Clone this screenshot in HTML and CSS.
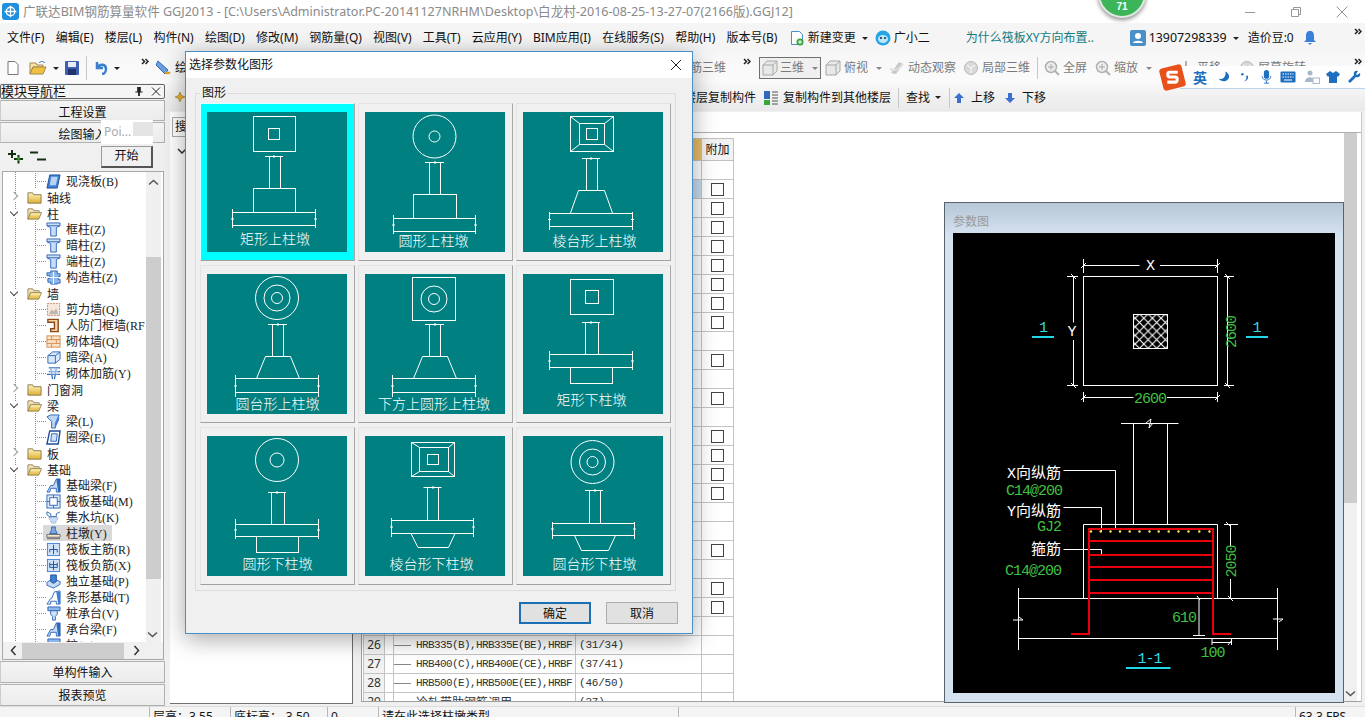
FILE: index.html
```html
<!DOCTYPE html>
<html lang="zh-CN">
<head>
<meta charset="utf-8">
<title>广联达BIM钢筋算量软件 GGJ2013</title>
<link rel="stylesheet" href="styles.css">
</head>
<body>
<svg class="defs" width="0" height="0">
  <defs>
    <linearGradient id="fy" x1="0" y1="0" x2="0" y2="1"><stop offset="0" stop-color="#fff3c0"/><stop offset="1" stop-color="#e0b030"/></linearGradient>
    <pattern id="hatch" width="8.6" height="8.6" patternUnits="userSpaceOnUse"><path d="M0 0L8.6 8.6M8.6 0L0 8.6" stroke="#fff" stroke-width="1.1"/></pattern>
    <symbol id="i-more" viewBox="0 0 8 7"><path d="M1 1l2.500 2.500L1 6M4.500 1L7 3.500 4.500 6" stroke="#222" stroke-width="1.500" fill="none"/></symbol>
    <symbol id="i-closed" viewBox="0 0 16 16"><path d="M1 3h5l1 2h8v9H1z" fill="url(#fy)" stroke="#8a7a50"/></symbol>
    <symbol id="i-open" viewBox="0 0 16 16"><path d="M1 3h5l1 2h6v2H4L1 14z" fill="#f3e3b0" stroke="#9a8a60"/><path d="M4 7h11.500l-3 7H1z" fill="url(#fy)" stroke="#9a8a60"/></symbol>
    <symbol id="i-slab" viewBox="0 0 16 16"><path d="M4 1h11l-3 14H1z" fill="#3f80d6" stroke="#1f4e9a"/><path d="M5.500 3h7l-2 9H4z" fill="#b9d4f4"/></symbol>
    <symbol id="i-col" viewBox="0 0 16 16"><path d="M1 1h14v3l-4 2v9H5V6L1 4z" fill="#c9def6" stroke="#2f68b8"/><path d="M1 4h14" stroke="#2f68b8"/></symbol>
    <symbol id="i-struct" viewBox="0 0 16 16"><path d="M5 1h7v3h3v3h-2v3h2v4h-3v1H5v-2H2V9h2V6H1V3h4z" fill="#8db6ea" stroke="#2f68b8"/><path d="M8 2v13M3 8h11" stroke="#fff"/></symbol>
    <symbol id="i-shear" viewBox="0 0 16 16"><rect x="1.500" y="1.500" width="13" height="13" fill="#f7e8de" stroke="#c88a6a" stroke-dasharray="2 1"/><path d="M3 13l3-5 2 2 3-3 2 6z" fill="#bcb6b0"/></symbol>
    <symbol id="i-door" viewBox="0 0 16 16"><path d="M2 1.500h11v13H5v-3h4v-7H2z" fill="#f6d6b0" stroke="#8a4a18" stroke-width="1.500"/></symbol>
    <symbol id="i-brick" viewBox="0 0 16 16"><rect x="1" y="2" width="14" height="12" fill="#fbe3c6" stroke="#d48a50"/><path d="M1 6h14M1 10h14M6 2v4M11 6v4M6 10v4" stroke="#d48a50"/></symbol>
    <symbol id="i-hidden" viewBox="0 0 16 16"><path d="M2 6l5-4h8v8l-5 4H2z" fill="#d9e9fa" stroke="#2f68b8"/><path d="M2 6h8v8M10 6l5-4" stroke="#2f68b8" fill="none"/></symbol>
    <symbol id="i-rebar" viewBox="0 0 16 16"><path d="M3 2h12M3 6h12M5 2l2 12M11 2l-2 12M1 9h14" stroke="#2f68b8" stroke-width="1.300" fill="none"/><rect x="4" y="2" width="9" height="7" fill="#cfe2f8" opacity=".6"/></symbol>
    <symbol id="i-beam" viewBox="0 0 16 16"><path d="M1 3l4-2h9l-4 9v5H6V8z" fill="#bcd5f2" stroke="#2f68b8"/><path d="M10 10l4-9v5l-4 9z" fill="#3f80d6"/></symbol>
    <symbol id="i-ring" viewBox="0 0 16 16"><path d="M4 1h11l-2 14H1z" fill="#fff" stroke="#1f4e9a" stroke-width="1.500"/><path d="M6 4h6l-1 8H5z" fill="#cfe2f8" stroke="#2f68b8"/></symbol>
    <symbol id="i-fbeam" viewBox="0 0 16 16"><path d="M1 15l4-7h3l3-7h4v14h-4v-4H5l-1 4z" fill="#c6dbf4" stroke="#2f68b8"/><path d="M11 1h4v14h-2z" fill="#2f68b8"/></symbol>
    <symbol id="i-raft" viewBox="0 0 16 16"><rect x="1" y="1" width="14" height="14" fill="#dbe9f9" stroke="#2f68b8"/><rect x="4" y="4" width="8" height="8" fill="#fff" stroke="#2f68b8"/><path d="M1 8h3M12 8h3M8 1v3M8 12v3" stroke="#2f68b8"/></symbol>
    <symbol id="i-pit" viewBox="0 0 16 16"><path d="M1 2l4 2v3h6V4l4-2M1 2v3l4 3" fill="none" stroke="#2f68b8"/><path d="M3 8h10l-3 6H6z" fill="#c6dbf4" stroke="#8a9ab0" stroke-dasharray="1 1"/></symbol>
    <symbol id="i-pier" viewBox="0 0 16 16"><path d="M6 1h4v3l2 4H4l2-4z" fill="#7fa8e0" stroke="#2f68b8"/><path d="M1 9h14v3H1z" fill="#f2e6d0" stroke="#6a6a6a"/><path d="M1 13.500h14" stroke="#6a6a6a"/></symbol>
    <symbol id="i-main" viewBox="0 0 16 16"><rect x="1.500" y="1.500" width="13" height="13" fill="#cfe2f8" stroke="#3f80d6"/><path d="M8 3v10M4 8h8M4 8v3M12 8v3" stroke="#1f4e9a" fill="none"/></symbol>
    <symbol id="i-neg" viewBox="0 0 16 16"><rect x="1.500" y="1.500" width="13" height="13" fill="#cfe2f8" stroke="#3f80d6"/><path d="M8 3v10M4 5v5h8V5M4 7h8" stroke="#1f4e9a" fill="none"/></symbol>
    <symbol id="i-iso" viewBox="0 0 16 16"><path d="M1 9l6-4 8 3v3l-7 4-7-3z" fill="#c6dbf4" stroke="#2f68b8"/><path d="M5 1h6v7l-3 2-3-2z" fill="#3f80d6" stroke="#1f4e9a"/></symbol>
    <symbol id="i-strip" viewBox="0 0 16 16"><path d="M1 15l4-6h1l3-7 6-1v14h-4v-3H5v3z" fill="#fff" stroke="#2f68b8"/><path d="M11 2h4v13h-2z" fill="#3f80d6"/></symbol>
    <symbol id="i-pile" viewBox="0 0 16 16"><path d="M2 1h13v4H2z" fill="#8db6ea" stroke="#2f68b8"/><path d="M5 5h7v4l-2 2v4H7v-4L5 9z" fill="#cfe2f8" stroke="#2f68b8"/></symbol>
    <symbol id="i-cube" viewBox="0 0 16 16"><path d="M1 5l4-4h10v10l-4 4H1z" fill="#e8e8e8" stroke="#a8a8a8"/><path d="M1 5h10v10M11 5l4-4" fill="none" stroke="#a8a8a8"/></symbol>
    <symbol id="i-orbit" viewBox="0 0 16 16"><path d="M2 13l8-11 4 2-7 10z" fill="#c8c8c8"/><path d="M1 9c4 2 9 0 13-5" stroke="#e0e0e0" stroke-width="2" fill="none"/></symbol>
    <symbol id="i-local" viewBox="0 0 16 16"><circle cx="8" cy="8" r="6.500" fill="#d8d8d8" stroke="#b8b8b8"/><path d="M4 5l4 3 4-3M8 8v5" stroke="#fff" fill="none"/></symbol>
    <symbol id="i-zoom" viewBox="0 0 16 16"><circle cx="7" cy="7" r="5.500" fill="#eee" stroke="#b0b0b0" stroke-width="1.500"/><path d="M11 11l4 4" stroke="#b0b0b0" stroke-width="2"/><path d="M7 4v6M4 7h6" stroke="#a8a8a8"/></symbol>
    <symbol id="i-pan" viewBox="0 0 16 16"><path d="M8 1v14M1 8h14" stroke="#b0b0b0" stroke-width="2"/></symbol>
  </defs>
</svg>

<header class="titlebar">
  <svg class="app-logo" viewBox="0 0 16 16"><rect width="16" height="16" rx="3" fill="#1e90e0"/><circle cx="8" cy="8" r="4" stroke="#fff" stroke-width="1.200" fill="none"/><path d="M8 2.500v11M2.500 8h11" stroke="#fff" stroke-width="1.200"/></svg>
  <span class="title-text">广联达BIM钢筋算量软件 GGJ2013 - [C:\Users\Administrator.PC-20141127NRHM\Desktop\白龙村-2016-08-25-13-27-07(2166版).GGJ12]</span>
  <div class="winbtns">
    <svg class="winbtn" viewBox="0 0 14 14"><path d="M2 7.500h10" stroke="#999"/></svg>
    <svg class="winbtn" viewBox="0 0 14 14"><path d="M2.500 4.500h7v7h-7zM4.500 4.500v-2h7v7h-2" stroke="#999" fill="none"/></svg>
    <svg class="winbtn" viewBox="0 0 14 14"><path d="M1.500 1.500l11 11M12.500 1.500l-11 11" stroke="#999"/></svg>
  </div>
</header>

<nav class="menubar">
  <span class="mi">文件(F)</span><span class="mi">编辑(E)</span><span class="mi">楼层(L)</span><span class="mi">构件(N)</span><span class="mi">绘图(D)</span><span class="mi">修改(M)</span><span class="mi">钢筋量(Q)</span><span class="mi">视图(V)</span><span class="mi">工具(T)</span><span class="mi">云应用(Y)</span><span class="mi">BIM应用(I)</span><span class="mi">在线服务(S)</span><span class="mi">帮助(H)</span><span class="mi">版本号(B)</span>
  <svg class="ic16" viewBox="0 0 16 16"><path d="M2.500 1.500h8l3 3v10h-11z" fill="#fff" stroke="#4a90c8"/><circle cx="11" cy="12" r="3.500" fill="#3aa53a"/><path d="M11 10v4M9 12h4" stroke="#fff"/></svg>
  <span class="mi-plain">新建变更</span><i class="caret"></i>
  <svg class="ic16 xiao" viewBox="0 0 16 16"><circle cx="8" cy="8" r="7.500" fill="#27a3e8"/><ellipse cx="8" cy="9" rx="5" ry="4" fill="#bde8fb"/><circle cx="6" cy="8" r="1" fill="#124"/><circle cx="10" cy="8" r="1" fill="#124"/></svg>
  <span class="mi-plain">广小二</span>
  <span class="mi-link">为什么筏板XY方向布置..</span>
  <svg class="ic16 user" viewBox="0 0 16 16"><rect width="16" height="16" rx="2" fill="#4a90c8"/><circle cx="8" cy="6" r="3" fill="#fff"/><path d="M3 13c0-3 10-3 10 0z" fill="#fff"/></svg>
  <span class="mi-plain phone">13907298339</span><i class="caret"></i>
  <span class="mi-plain bean">造价豆:0</span>
  <svg class="bell" viewBox="0 0 12 14"><path d="M6 0c3 0 4 2 4 5v4l2 2H0l2-2V5c0-3 1-5 4-5z" fill="#3a80d8"/><path d="M4 12h4l-2 2z" fill="#3a80d8"/></svg>
  <svg class="more more-end" viewBox="0 0 8 7"><use href="#i-more"/></svg>
</nav>

<div class="toolbar">
  <div class="tb-left">
    <svg class="ic12" viewBox="0 0 12 14"><path d="M1 .5h7l3 3v10H1z" fill="#fff" stroke="#777"/></svg>
    <svg class="ic18" viewBox="0 0 18 16"><path d="M1 3h6l1 2h6v2H4L1 14z" fill="#f6e3a8" stroke="#a08a50"/><path d="M4 7h13l-3 7H1z" fill="#f2c040" stroke="#a08a50"/><path d="M10 3c2-2 4-2 6 0" stroke="#3a70c0" fill="none"/></svg>
    <i class="caret"></i>
    <svg class="ic14 save" viewBox="0 0 14 14"><rect width="14" height="14" rx="1" fill="#3f5fb0"/><rect x="3" y="1" width="8" height="5" fill="#e8eef8"/><rect x="3" y="8" width="8" height="6" fill="#22346e"/></svg>
    <i class="tb-sep"></i>
    <svg class="ic14 undo" viewBox="0 0 14 14"><path d="M3 1v6h6M3 7c3-5 9-4 9 1 0 3-2 5-4 5" stroke="#3b80d0" stroke-width="2.500" fill="none"/></svg>
    <i class="caret"></i>
    <svg class="more more-a" viewBox="0 0 8 7"><use href="#i-more"/></svg>
    <svg class="ic16 draw-ic" viewBox="0 0 16 16"><path d="M3 1l10 9-3 4L1 5z" fill="#6ca0e0" stroke="#2f68b8"/><path d="M10 12c2 2 4 1 5 0" stroke="#e0a020" stroke-width="2" fill="none"/></svg>
    <span class="tool-dark">绘图</span>
    <span class="tb-fill"></span>
    <span class="tool-text">钢筋三维</span>
  </div>
  <svg class="more more-b" viewBox="0 0 8 7"><use href="#i-more"/></svg>
  <div class="box3d"><svg class="ic16" viewBox="0 0 16 16"><use href="#i-cube"/></svg><span>三维</span><i class="caret gray"></i></div>
  <svg class="ic16 t-top" viewBox="0 0 16 16"><use href="#i-cube"/></svg><span class="tool-text t-gap">俯视</span><i class="caret gray t-car"></i>
  <svg class="ic16 t-orb" viewBox="0 0 16 16"><use href="#i-orbit"/></svg><span class="tool-text t-gap">动态观察</span>
  <svg class="ic16 t-loc" viewBox="0 0 16 16"><use href="#i-local"/></svg><span class="tool-text t-gap">局部三维</span>
  <i class="tb-sep sep-b"></i>
  <svg class="ic16 t-full" viewBox="0 0 16 16"><use href="#i-zoom"/></svg><span class="tool-text t-gap">全屏</span>
  <svg class="ic16 t-zoom" viewBox="0 0 16 16"><use href="#i-zoom"/></svg><span class="tool-text t-gap">缩放</span><i class="caret gray t-car"></i>
  <svg class="ic16 t-pan" viewBox="0 0 16 16"><use href="#i-pan"/></svg><span class="tool-text t-gap">平移</span>
  <svg class="ic16 t-rot" viewBox="0 0 16 16"><use href="#i-local"/></svg><span class="tool-text t-gap">屏幕旋转</span>
  <svg class="more more-end" viewBox="0 0 8 7"><use href="#i-more"/></svg>
</div>

<main class="workspace">
  <aside class="nav">
    <div class="nav-title"><span>模块导航栏</span><svg class="pin" viewBox="0 0 10 12"><path d="M3 1h4v5h2v1H6v4H4V7H1V6h2z" fill="#222"/></svg><svg class="pin" viewBox="0 0 10 10"><path d="M1 1l8 8M9 1L1 9" stroke="#222"/></svg></div>
    <div class="nav-btn">工程设置</div>
    <div class="nav-btn">绘图输入</div>
    <div class="nav-tools">
      <svg class="ic16" viewBox="0 0 16 16"><path d="M4 1v8M0 5h8M10.500 6v8.500M6 10h9" stroke="#143014" stroke-width="2"/><path d="M10.500 8v4M8.500 10h4" stroke="#3aa53a"/></svg>
      <svg class="ic16" viewBox="0 0 16 16"><path d="M0 3.500h8M7 10.500h9" stroke="#143014" stroke-width="2"/></svg>
    </div>
    <div class="tree-wrap">
      <div class="tree">
        <div class="t1"><svg class="ti"><use href="#i-slab"/></svg><span>现浇板(B)</span></div>
        <div class="t0"><i class="ar closed"></i><svg class="tf"><use href="#i-closed"/></svg><span>轴线</span></div>
        <div class="t0"><i class="ar opened"></i><svg class="tf"><use href="#i-open"/></svg><span>柱</span></div>
        <div class="t1"><svg class="ti"><use href="#i-col"/></svg><span>框柱(Z)</span></div>
        <div class="t1"><svg class="ti"><use href="#i-col"/></svg><span>暗柱(Z)</span></div>
        <div class="t1"><svg class="ti"><use href="#i-col"/></svg><span>端柱(Z)</span></div>
        <div class="t1"><svg class="ti"><use href="#i-struct"/></svg><span>构造柱(Z)</span></div>
        <div class="t0"><i class="ar opened"></i><svg class="tf"><use href="#i-open"/></svg><span>墙</span></div>
        <div class="t1"><svg class="ti"><use href="#i-shear"/></svg><span>剪力墙(Q)</span></div>
        <div class="t1"><svg class="ti"><use href="#i-door"/></svg><span>人防门框墙(RF</span></div>
        <div class="t1"><svg class="ti"><use href="#i-brick"/></svg><span>砌体墙(Q)</span></div>
        <div class="t1"><svg class="ti"><use href="#i-hidden"/></svg><span>暗梁(A)</span></div>
        <div class="t1"><svg class="ti"><use href="#i-rebar"/></svg><span>砌体加筋(Y)</span></div>
        <div class="t0"><i class="ar closed"></i><svg class="tf"><use href="#i-closed"/></svg><span>门窗洞</span></div>
        <div class="t0"><i class="ar opened"></i><svg class="tf"><use href="#i-open"/></svg><span>梁</span></div>
        <div class="t1"><svg class="ti"><use href="#i-beam"/></svg><span>梁(L)</span></div>
        <div class="t1"><svg class="ti"><use href="#i-ring"/></svg><span>圈梁(E)</span></div>
        <div class="t0"><i class="ar closed"></i><svg class="tf"><use href="#i-closed"/></svg><span>板</span></div>
        <div class="t0"><i class="ar opened"></i><svg class="tf"><use href="#i-open"/></svg><span>基础</span></div>
        <div class="t1"><svg class="ti"><use href="#i-fbeam"/></svg><span>基础梁(F)</span></div>
        <div class="t1"><svg class="ti"><use href="#i-raft"/></svg><span>筏板基础(M)</span></div>
        <div class="t1"><svg class="ti"><use href="#i-pit"/></svg><span>集水坑(K)</span></div>
        <div class="t1 sel"><svg class="ti"><use href="#i-pier"/></svg><span>柱墩(Y)</span></div>
        <div class="t1"><svg class="ti"><use href="#i-main"/></svg><span>筏板主筋(R)</span></div>
        <div class="t1"><svg class="ti"><use href="#i-neg"/></svg><span>筏板负筋(X)</span></div>
        <div class="t1"><svg class="ti"><use href="#i-iso"/></svg><span>独立基础(P)</span></div>
        <div class="t1"><svg class="ti"><use href="#i-strip"/></svg><span>条形基础(T)</span></div>
        <div class="t1"><svg class="ti"><use href="#i-pile"/></svg><span>桩承台(V)</span></div>
        <div class="t1"><svg class="ti"><use href="#i-fbeam"/></svg><span>承台梁(F)</span></div>
        <div class="t1"><svg class="ti"><use href="#i-pile"/></svg><span>桩(U)</span></div>
      </div>
      <div class="vscroll">
        <svg class="arrow" viewBox="0 0 15 15"><path d="M3 9.500l4.500-4 4.500 4" stroke="#555" stroke-width="1.500" fill="none"/></svg>
        <i class="v-thumb"></i>
        <svg class="arrow arrow-end" viewBox="0 0 15 15"><path d="M3 5.500l4.500 4 4.500-4" stroke="#555" stroke-width="1.500" fill="none"/></svg>
      </div>
    </div>
    <div class="hscroll">
      <svg class="arrow" viewBox="0 0 15 15"><path d="M9.500 3l-4 4.500 4 4.500" stroke="#333" stroke-width="1.500" fill="none"/></svg>
      <i class="h-thumb"></i>
      <svg class="arrow" viewBox="0 0 15 15"><path d="M5.500 3l4 4.500-4 4.500" stroke="#333" stroke-width="1.500" fill="none"/></svg>
    </div>
    <div class="nav-btn foot">单构件输入</div>
    <div class="nav-btn foot">报表预览</div>
  </aside>

  <div class="main-col">
    <div class="toolbar2">
      <svg class="ic10 star" viewBox="0 0 10 10"><path d="M5 0l1.500 3.500L10 5 6.500 6.500 5 10 3.500 6.500 0 5l3.500-1.500z" fill="#e8b030" stroke="#8a6a20" stroke-width=".5"/></svg>
      <span class="tb2-fill"></span>
      <span class="tb2-text">从其他楼层复制构件</span>
      <svg class="ic16 copy-ic" viewBox="0 0 16 16"><rect x="1" y="1" width="6" height="8" fill="#2f68b8"/><rect x="1" y="10" width="6" height="5" fill="#3aa53a"/><path d="M9 2h6M9 5h6M9 8h6M9 11h6M9 14h6" stroke="#555"/></svg>
      <span class="tb2-text">复制构件到其他楼层</span>
      <i class="tb-sep sep2"></i>
      <span class="tb2-text">查找</span><i class="caret find-car"></i>
      <i class="tb-sep sep3"></i>
      <svg class="ic10 up" viewBox="0 0 10 10"><path d="M5 0l5 5H7v5H3V5H0z" fill="#3b70d0"/></svg>
      <span class="tb2-text mv">上移</span>
      <svg class="ic10 dn" viewBox="0 0 10 10"><path d="M5 10l5-5H7V0H3v5H0z" fill="#3b70d0"/></svg>
      <span class="tb2-text mv">下移</span>
    </div>
    <div class="panels">
      <section class="list-panel">
        <div class="search"><span>搜</span></div>
        <svg class="chev" viewBox="0 0 10 6"><path d="M1 1l4 4 4-4" stroke="#333" stroke-width="1.500" fill="none"/></svg>
      </section>
      <section class="grid-panel">
        <div class="grid-tabs"></div>
        <div class="grid-body">
          <div class="grid-clip">
            <table class="grid">
              <colgroup><col class="c1"><col class="c2"><col class="c3"><col class="c4"><col class="c5"></colgroup>
              <thead><tr><th></th><th></th><th>级别</th><th class="hot"></th><th>附加</th></tr></thead>
              <tbody>
                <tr><td></td><td></td><td></td><td></td><td></td></tr>
                <tr><td>1</td><td></td><td></td><td class="cur"></td><td><i class="chk"></i></td></tr>
                <tr><td>2</td><td></td><td></td><td></td><td><i class="chk"></i></td></tr>
                <tr><td>3</td><td></td><td></td><td></td><td><i class="chk"></i></td></tr>
                <tr><td>4</td><td></td><td></td><td></td><td><i class="chk"></i></td></tr>
                <tr><td>5</td><td></td><td></td><td></td><td><i class="chk"></i></td></tr>
                <tr><td>6</td><td></td><td></td><td></td><td><i class="chk"></i></td></tr>
                <tr><td>7</td><td></td><td></td><td></td><td><i class="chk"></i></td></tr>
                <tr><td>8</td><td></td><td></td><td></td><td><i class="chk"></i></td></tr>
                <tr><td>9</td><td></td><td></td><td></td><td></td></tr>
                <tr><td>10</td><td></td><td></td><td></td><td><i class="chk"></i></td></tr>
                <tr><td>11</td><td></td><td></td><td></td><td></td></tr>
                <tr><td>12</td><td></td><td></td><td></td><td><i class="chk"></i></td></tr>
                <tr><td>13</td><td></td><td></td><td></td><td></td></tr>
                <tr><td>14</td><td></td><td></td><td></td><td><i class="chk"></i></td></tr>
                <tr><td>15</td><td></td><td></td><td></td><td><i class="chk"></i></td></tr>
                <tr><td>16</td><td></td><td></td><td></td><td><i class="chk"></i></td></tr>
                <tr><td>17</td><td></td><td></td><td></td><td><i class="chk"></i></td></tr>
                <tr><td>18</td><td></td><td></td><td></td><td></td></tr>
                <tr><td>19</td><td></td><td></td><td></td><td></td></tr>
                <tr><td>20</td><td></td><td></td><td></td><td><i class="chk"></i></td></tr>
                <tr><td>21</td><td></td><td></td><td></td><td></td></tr>
                <tr><td>22</td><td></td><td></td><td></td><td><i class="chk"></i></td></tr>
                <tr><td>23</td><td></td><td></td><td></td><td><i class="chk"></i></td></tr>
                <tr><td>24</td><td></td><td></td><td></td><td></td></tr>
                <tr><td>26</td><td></td><td class="nm">HRB335(B),HRB335E(BE),HRBF</td><td class="val">(31/34)</td><td></td></tr>
                <tr><td>27</td><td></td><td class="nm">HRB400(C),HRB400E(CE),HRBF</td><td class="val">(37/41)</td><td></td></tr>
                <tr><td>28</td><td></td><td class="nm">HRB500(E),HRB500E(EE),HRBF</td><td class="val">(46/50)</td><td></td></tr>
                <tr><td>29</td><td></td><td class="nm cjk">冷轧带肋钢筋调用</td><td class="val">(37)</td><td></td></tr>
              </tbody>
            </table>
          </div>
          <div class="vscroll2">
            <i class="v2-thumb"></i>
            <svg class="arrow arrow-end" viewBox="0 0 15 15"><path d="M3 5.500l4.500 4 4.500-4" stroke="#555" stroke-width="1.500" fill="none"/></svg>
          </div>
        </div>
      </section>
    </div>
  </div>
</main>

<footer class="statusbar">
  <span class="s s1"></span><span class="s s2">层高：3.55</span><span class="s s3">底标高：-3.50</span><span class="s s4">0</span><span class="s s5">请在此选择柱墩类型</span><span class="s s6"></span><span class="s s7">63.3 FPS</span>
</footer>

<div class="badge"><span>71</span></div>

<div class="sogou">
  <svg class="sg-logo" viewBox="0 0 26 26"><rect x="2" y="2" width="22" height="22" rx="3" transform="rotate(-14 13 13)" fill="#e8501c"/><path d="M18 8H10c-2 0-2 4 0 4.500h6c2 .5 2 4.500 0 5H8" stroke="#fff" stroke-width="3" fill="none"/></svg>
  <span class="sg-en">英</span>
  <svg class="sg sg-m" viewBox="0 0 14 14"><path d="M9 1c1 5-2 9-7 8 2 4 11 4 11-3 0-2-2-4-4-5z" fill="#1f6fc0"/></svg>
  <svg class="sg sg-p" viewBox="2 1 10 13"><circle cx="5" cy="4" r="1.500" fill="#1f6fc0"/><path d="M8 6c3 0 3 4-1 7 4-1 6-4 5-7z" fill="#1f6fc0"/></svg>
  <svg class="sg sg-v" viewBox="0 0 14 16"><rect x="4" y="0" width="6" height="10" rx="3" fill="#1f6fc0"/><path d="M2 7c0 6 10 6 10 0M7 12v3M4 15h6" stroke="#1f6fc0" fill="none"/></svg>
  <svg class="sg sg-k" viewBox="0 0 16 12"><rect x=".5" y=".5" width="15" height="11" rx="1" fill="#1f6fc0"/><path d="M2.500 3h11M2.500 6h11" stroke="#fff" stroke-dasharray="1.500 1"/><path d="M4 9h8" stroke="#fff"/></svg>
  <svg class="sg sg-u" viewBox="0 0 16 14"><circle cx="6" cy="3" r="2.500" fill="#a8b8c8"/><path d="M1 12c0-6 9-6 9-1v1z" fill="#a8b8c8"/><rect x="9" y="8" width="6.500" height="5.500" fill="#fff" stroke="#a8b8c8"/></svg>
  <svg class="sg sg-s" viewBox="0 0 14 14"><path d="M4 1L0 4l2 3 1-1v7h8V6l1 1 2-3-4-3-3 2z" fill="#1f6fc0"/></svg>
  <svg class="sg sg-w" viewBox="0 0 14 14"><path d="M13 3l-3 2-1-1 2-3c-3-1-5 1-4 4L1 11l2 2 6-6c3 1 5-1 4-4z" fill="#1f6fc0"/></svg>
</div>

<div class="poi"><span>Poi...</span><i></i></div>
<div class="poi-start">开始</div>

<!-- parameter drawing -->
<div class="param">
  <div class="param-title">参数图</div>
  <svg class="param-svg" viewBox="953 233 382 460">
    <g class="w">
      <rect x="1083.500" y="276.500" width="134" height="109"/>
      <rect x="1133.500" y="314.500" width="34" height="34" class="solid"/>
      <path d="M1083.500 265.500h56M1160 265.500h57.500M1083.500 259v14M1217.500 259v14M1081 268l5-5M1215 268l5-5"/>
      <path d="M1073.500 276.500v46M1073.500 340v45.500M1067 276.500h11M1067 385.500h11M1071 274l5 5M1071 383l5 5"/>
      <path d="M1227.500 276.500v109M1224 276.500h10M1224 385.500h10M1225 274l5 5M1225 383l5 5"/>
      <path d="M1083.500 397.500h50M1167 397.500h50.500M1083.500 392v10M1217.500 392v10M1081 400l5-5M1215 400l5-5"/>
      <path d="M1121 423.500h57.500M1133.500 423.500v101M1167.500 423.500v101M1150 424l-4-1 5-4-2 9 4-5"/>
      <path d="M1083.500 524.500h134M1083.500 524.500v74M1217.500 524.500v74"/>
      <path d="M1018.500 598.500h259M1018.500 638.500h259M1018.500 588v62M1277.500 588v62M1013 620h10l-4-3M1273 619h10l-4 3"/>
      <path d="M1063.500 470.500h52v58M1063.500 507.500h38v24M1063.500 549.500h38v6"/>
      <path d="M1230.500 524v22M1230.500 579v19M1224 524.500h14M1226 522l5 5M1228 596l5 5"/>
      <path d="M1199 598v37M1193 635.500h12M1197 596l3 4"/>
      <path d="M1212 642.500h20M1212 639v6M1231.500 639v6M1228 645l4-5"/>
    </g>
    <g class="r">
      <path d="M1071 634h18V529h124v105h18"/>
      <path d="M1089 541h124M1089 555h124M1089 567h124M1089 580h124M1089 593h124"/>
    </g>
    <g class="dots">
      <circle cx="1091" cy="531.500" r="1.200"/><circle cx="1100.700" cy="531.500" r="1.200"/><circle cx="1110.500" cy="531.500" r="1.200"/><circle cx="1120" cy="531.500" r="1.200"/><circle cx="1129.700" cy="531.500" r="1.200"/><circle cx="1139.500" cy="531.500" r="1.200"/><circle cx="1149.500" cy="531.500" r="1.200"/><circle cx="1158.700" cy="531.500" r="1.200"/><circle cx="1168.700" cy="531.500" r="1.200"/><circle cx="1178.500" cy="531.500" r="1.200"/><circle cx="1188.500" cy="531.500" r="1.200"/><circle cx="1199.300" cy="531.500" r="1.200"/><circle cx="1209.500" cy="531.500" r="1.200"/>
    </g>
    <g class="cy">
      <path d="M1032 337h22M1246 337h22M1126 668h44.500"/>
    </g>
    <text class="tm twh" x="1150" y="270" text-anchor="middle">X</text>
    <text class="tm twh" x="1071.500" y="336" text-anchor="middle">Y</text>
    <text class="tm tgr" x="1150" y="403" text-anchor="middle">2600</text>
    <text class="tm tgr" transform="translate(1236 332) rotate(-90)" text-anchor="middle">2600</text>
    <text class="tm tcy" x="1043" y="332" text-anchor="middle">1</text>
    <text class="tm tcy" x="1256.500" y="332" text-anchor="middle">1</text>
    <text class="tc twh" x="1061" y="478" text-anchor="end">X向纵筋</text>
    <text class="tm tgr" x="1062" y="495" text-anchor="end">C14@200</text>
    <text class="tc twh" x="1061" y="516" text-anchor="end">Y向纵筋</text>
    <text class="tm tgr" x="1061" y="531" text-anchor="end">GJ2</text>
    <text class="tc twh" x="1061" y="554" text-anchor="end">箍筋</text>
    <text class="tm tgr" x="1061" y="575" text-anchor="end">C14@200</text>
    <text class="tm tgr" transform="translate(1236 561.500) rotate(-90)" text-anchor="middle">2050</text>
    <text class="tm tgr" x="1184" y="622" text-anchor="middle">610</text>
    <text class="tm tgr" x="1212.500" y="657" text-anchor="middle">100</text>
    <text class="tm tcy" x="1149.500" y="663" text-anchor="middle">1-1</text>
  </svg>
</div>

<!-- dialog -->
<div class="dialog">
  <div class="dlg-title"><span>选择参数化图形</span><svg class="dlg-x" viewBox="0 0 12 12"><path d="M1 1l10 10M11 1L1 11" stroke="#222"/></svg></div>
  <div class="dlg-body">
    <fieldset class="group">
      <legend>图形</legend>
      <div class="cards">
        <div class="card on"><svg class="pic" viewBox="0 0 140 140">
          <rect x="46.500" y="4.500" width="42" height="35"/><rect x="61.500" y="16.500" width="11" height="11"/>
          <path d="M58 44.500h18M62.500 44.500V76.500M73.500 44.500V76.500M67 43v3"/>
          <rect x="46.500" y="76.500" width="42" height="24"/><rect x="25.500" y="100.500" width="83" height="13"/>
          <path d="M25.500 97v19M108.500 97v19M24 107h3M107 107h3"/>
          <text x="68" y="132" text-anchor="middle">矩形上柱墩</text></svg></div>
        <div class="card"><svg class="pic" viewBox="0 0 140 140">
          <circle cx="69.500" cy="24.500" r="21.500"/><circle cx="69.500" cy="24.500" r="5.500"/>
          <path d="M60 50.500h19M64.500 50.500V82.500M75.500 50.500V82.500M70 49v3"/>
          <rect x="48.500" y="82.500" width="43" height="24"/><rect x="28.500" y="106.500" width="82" height="13"/>
          <path d="M28.500 103v19M110.500 103v19M27 113h3M109 113h3"/>
          <text x="68.500" y="134" text-anchor="middle">圆形上柱墩</text></svg></div>
        <div class="card"><svg class="pic" viewBox="0 0 140 140">
          <rect x="47.500" y="4.500" width="43" height="35"/><rect x="56.500" y="11.500" width="25" height="21"/><rect x="63.500" y="16.500" width="11" height="11"/>
          <path d="M47.500 4.500l9 7M90.500 4.500l-9 7M47.500 39.500l9-7M90.500 39.500l-9-7"/>
          <path d="M59 46.500h18M63.500 46.500V78.500M74.500 46.500V78.500M68 45v3M55.500 78.500h26l8 22.500M55.500 78.500l-8 22.500"/>
          <rect x="26.500" y="101.500" width="83" height="13"/>
          <path d="M26.500 100v18M109.500 100v18M25 107.500h3M108 107.500h3"/>
          <text x="71.500" y="134" text-anchor="middle">棱台形上柱墩</text></svg></div>

        <div class="card"><svg class="pic" viewBox="0 0 140 140">
          <circle cx="70" cy="24" r="21.500"/><circle cx="70" cy="24" r="13"/><circle cx="70" cy="24" r="5.500"/>
          <path d="M61 50.500h19M65.500 50.500V82.500M76.500 50.500V82.500M71 49v3M58.500 82.500h25l9 22M58.500 82.500l-9 22"/>
          <rect x="28.500" y="104.500" width="83" height="14"/>
          <path d="M28.500 101v22M111.500 101v22M27 112h3M110 112h3"/>
          <text x="70.500" y="135" text-anchor="middle">圆台形上柱墩</text></svg></div>
        <div class="card"><svg class="pic" viewBox="0 0 140 140">
          <rect x="47.500" y="3.500" width="43" height="43"/><circle cx="69" cy="25" r="13"/><circle cx="69" cy="25" r="5.500"/>
          <path d="M60 50.500h19M64.500 50.500V82.500M75.500 50.500V82.500M70 49v3M57.500 82.500h25l9 22M57.500 82.500l-9 22"/>
          <rect x="27.500" y="104.500" width="83" height="14"/>
          <path d="M27.500 101v22M110.500 101v22M26 112h3M109 112h3"/>
          <text x="69" y="135" text-anchor="middle">下方上圆形上柱墩</text></svg></div>
        <div class="card"><svg class="pic" viewBox="0 0 140 140">
          <rect x="47.500" y="5.500" width="43" height="35"/><rect x="62.500" y="16.500" width="13" height="13"/>
          <path d="M59 48.500h18M62.500 48.500V80.500M75.500 48.500V80.500M68 47v3"/>
          <rect x="26.500" y="80.500" width="83" height="13"/><rect x="47.500" y="93.500" width="42" height="16"/>
          <path d="M26.500 77v19M109.500 77v19M25 87h3M108 87h3"/>
          <text x="68.500" y="131" text-anchor="middle">矩形下柱墩</text></svg></div>

        <div class="card"><svg class="pic" viewBox="0 0 140 140">
          <circle cx="70" cy="24" r="21.500"/><circle cx="70" cy="24" r="7"/>
          <path d="M61 56.500h18M64.500 56.500V88.500M77.500 56.500V88.500M70 55v3"/>
          <rect x="28.500" y="88.500" width="83" height="12"/><rect x="49.500" y="100.500" width="42" height="16"/>
          <path d="M28.500 83v20M111.500 83v20M27 94h3M110 94h3"/>
          <text x="70.500" y="133" text-anchor="middle">圆形下柱墩</text></svg></div>
        <div class="card"><svg class="pic" viewBox="0 0 140 140">
          <rect x="46.500" y="6.500" width="43" height="34"/><rect x="54.500" y="11.500" width="29" height="24"/><rect x="62.500" y="18.500" width="11" height="10"/>
          <path d="M46.500 6.500l8 5M89.500 6.500l-6 5M46.500 40.500l8-5M89.500 40.500l-6-5"/>
          <path d="M58.500 51.500h18M62.500 51.500V84M73.500 51.500V84M68 50v3"/>
          <rect x="26.500" y="84.500" width="82" height="13"/>
          <path d="M26.500 82v19M108.500 82v19M25 91h3M107 91h3M46 97.500l7 14h30.500l6.500-14"/>
          <text x="66.500" y="133" text-anchor="middle">棱台形下柱墩</text></svg></div>
        <div class="card"><svg class="pic" viewBox="0 0 140 140">
          <circle cx="69.500" cy="26" r="21.500"/><circle cx="69.500" cy="26" r="13"/><circle cx="69.500" cy="26" r="5.500"/>
          <path d="M62 54.500h18M66.500 54.500V87M77.500 54.500V87M72 53v3"/>
          <rect x="29.500" y="87.500" width="82" height="12"/>
          <path d="M29.500 86v17M111.500 86v17M28 93h3M110 93h3M51.500 99.500l7 15h27l7-15"/>
          <text x="71.500" y="133" text-anchor="middle">圆台形下柱墩</text></svg></div>
      </div>
    </fieldset>
    <div class="dlg-foot">
      <button class="btn primary" type="button">确定</button>
      <button class="btn" type="button">取消</button>
    </div>
  </div>
</div>
</body>
</html>
```

FILE: styles.css
```css
* { box-sizing: border-box; }
html, body { margin: 0; padding: 0; }
body {
  width: 1365px; height: 717px; overflow: hidden; position: relative;
  display: flex; flex-direction: column; background: #f0f0f0; color: #111;
  font: 12px/16px "Noto Sans", "Noto Sans CJK SC", sans-serif;
}
.defs { position: absolute; }
svg { display: block; flex: none; }
i { display: block; flex: none; }
.ic10 { width: 10px; height: 10px; }
.ic12 { width: 12px; height: 14px; }
.ic14 { width: 14px; height: 14px; }
.ic16 { width: 16px; height: 16px; }
.ic18 { width: 18px; height: 16px; }

/* title */
.titlebar { height: 23px; background: #fff; display: flex; align-items: center; padding-left: 2px; flex: none; }
.app-logo { width: 17px; height: 17px; }
.title-text { margin-left: 4px; color: #8a8a8a; font-size: 12.55px; white-space: nowrap; }
.winbtns { margin-left: auto; display: flex; gap: 32px; padding-right: 16px; }
.winbtn { width: 14px; height: 14px; }

/* menu */
.menubar { height: 30px; background: #f5f5f5; display: flex; align-items: center; padding-left: 7px; white-space: nowrap; flex: none; }
.mi { margin-right: 11.2px; font-size: 12px; color: #111; }
.mi-plain { font-size: 12px; margin-left: 3px; }
.caret { width: 0; height: 0; border-left: 3px solid transparent; border-right: 3px solid transparent; border-top: 3px solid #222; margin: 0 6px; }
.caret.gray { border-top-color: #888; }
.xiao { margin-left: 1px; }
.mi-link { color: #137a80; margin-left: 36px; width: 164px; font-size: 12px; }
.phone { font-size: 12.4px; }
.bean { margin-left: 3px; }
.bell { width: 12px; height: 14px; margin-left: 10px; }
.more { width: 8px; height: 7px; }
.more-end { margin: -14px 3px 0 auto; }

/* toolbar */
.toolbar { height: 30px; background: linear-gradient(#f7f7f7, #fbfbfb); display: flex; align-items: center; flex: none; white-space: nowrap; color: #7a7a7a; }
.tb-left { width: 726px; display: flex; align-items: center; padding-left: 7px; flex: none; }
.tb-left .ic18 { margin-left: 10px; }
.tb-sep { width: 1px; height: 24px; background: #c8c8c8; margin: 0 7px; }
.more-a { margin: -14px 0 0 15px; }
.draw-ic { margin-left: 6px; }
.tool-dark { margin-left: 4px; color: #111; }
.tb-fill { flex: 1; }
.tool-text { font-size: 12px; color: #7a7a7a; }
.more-b { margin: -14px 0 0 17px; }
.box3d { margin-left: 8px; width: 62px; height: 22px; border: 1px solid #707070; display: flex; align-items: center; padding-left: 2px; gap: 2px; background: #f0f0f0; }
.box3d .caret { margin: 0 0 0 6px; }
.t-top { margin-left: 4px; }
.t-gap { margin-left: 3px; }
.t-car { margin: 0 0 0 8px; }
.t-orb { margin-left: 7px; }
.t-loc { margin-left: 7px; }
.sep-b { margin: 0 6px 0 7px; height: 22px; }
.t-zoom { margin-left: 8px; }
.t-pan { margin-left: 26px; }
.t-rot { margin-left: 18px; }

/* workspace */
.workspace { flex: 1; display: flex; min-height: 0; }
.nav { width: 165px; flex: none; display: flex; flex-direction: column; padding-top: 1px; background: #f0f0f0; }
.nav-title { height: 15px; border: 1px solid #666; border-radius: 2px; display: flex; align-items: center; font-size: 13px; line-height: 13px; background: #f5f5f5; }
.nav-title span { flex: 1; }
.pin { width: 10px; height: 11px; margin-right: 7px; }
.pin + .pin { margin-right: 3px; }
.nav-btn { height: 21px; margin-top: 1px; text-align: center; line-height: 23px; font-size: 12px; background: linear-gradient(#f4f4f4, #ececec); border: 1px solid #b0b0b0; border-left-color: #ccc; flex: none; }
.nav-btn.foot { height: 22px; line-height: 21px; }
.nav-tools { height: 28px; display: flex; align-items: center; padding-left: 8px; gap: 6px; flex: none; }
.tree-wrap { flex: 1; min-height: 0; border: 1px solid #a8a8a8; border-bottom: none; margin-left: 2px; margin-right: 1px; background: #fff; display: flex; position: relative; overflow: hidden; }
.tree { flex: 1; overflow: hidden; padding-top: 1px; font-family: "Liberation Serif", "Noto Sans CJK SC", serif; font-size: 12px; color: #222;
  background: repeating-linear-gradient(#888 0 1px, transparent 1px 2px) 12px 0 / 1px 100% no-repeat; }
.t0, .t1 { height: 16px; display: flex; align-items: center; white-space: nowrap; }
.t0 { padding-left: 7px; }
.t1 { padding-left: 43px; position: relative;
  background: repeating-linear-gradient(#888 0 1px, transparent 1px 2px) 32px 0 / 1px 100% no-repeat; }
.t1 span, .t0 span { position: relative; top: 1px; }
.t1::before { content: ""; position: absolute; left: 32px; top: 8px; width: 11px; border-top: 1px dotted #888; }
.t0 .tf { width: 15px; height: 15px; margin: 0 5px 0 8px; }
.t0 span { font-size: 12px; font-family: "Noto Sans CJK SC", sans-serif; }
.ti { width: 15px; height: 15px; margin-right: 5px; position: relative; }
.t1.sel::after { content: ""; position: absolute; left: 40px; top: 0; width: 69px; height: 16px; background: #d9d9d9; z-index: 0; }
.t1.sel .ti, .t1.sel span { position: relative; z-index: 1; }
.ar { width: 9px; height: 9px; background: #fff; position: relative; }
.ar::before { content: ""; position: absolute; left: 1px; top: 0; width: 5px; height: 5px; border-right: 1.500px solid #999; border-bottom: 1.500px solid #999; }
.ar.closed::before { transform: rotate(-45deg); }
.ar.opened::before { transform: rotate(45deg); border-color: #444; }
.vscroll { width: 15px; flex: none; background: #f0f0f0; margin-right: 2px; display: flex; flex-direction: column; position: relative; }
.arrow { width: 15px; height: 15px; }
.arrow-end { position: absolute; bottom: 0; }
.vscroll .arrow { margin-top: 3px; }
.vscroll .arrow-end { margin-top: 0; }
.v-thumb { height: 322px; margin-top: 67px; background: #cdcdcd; }
.hscroll { height: 18px; flex: none; border: 1px solid #a8a8a8; border-top: none; margin: 0 1px 0 2px; display: flex; align-items: center; padding-left: 3px; background: #f0f0f0; }
.h-thumb { width: 102px; height: 16px; margin: 0 5px 0 1px; background: #cdcdcd; }

/* main column */
.main-col { flex: 1; min-width: 0; display: flex; flex-direction: column; }
.toolbar2 { height: 28px; flex: none; display: flex; align-items: center; background: linear-gradient(#f8f8f8, #e9e9e9); white-space: nowrap; padding: 1px 0 0 10px; }
.star { margin-top: -2px; }
.tb2-fill { width: 463px; flex: none; }
.tb2-text { font-size: 12px; color: #111; }
.copy-ic { margin: 0 4px 0 7px; }
.sep2 { margin: 0 7px; height: 20px; }
.find-car { margin: 0 3px 0 5px; }
.sep3 { margin: 0 4px 0 5px; height: 20px; }
.mv { margin: 0 10px 0 7px; }
.panels { flex: 1; min-height: 0; display: flex; gap: 8px; padding: 1px 3px 2px 5px; background: #f0f0f0; }
.list-panel { width: 183px; flex: none; background: #fff; border-right: 1px solid #707070; border-bottom: 1px solid #707070; position: relative; }
.search { height: 20px; margin: 5px 0 0 2px; border: 1px solid #aaa; border-right: none; padding-left: 2px; line-height: 18px; background: #fff; }
.chev { width: 10px; height: 6px; margin: 11px 0 0 7px; }
.grid-panel { flex: 1; min-width: 0; background: #fff; display: flex; flex-direction: column; border-left: 1px solid #a0a0a0; border-right: 1px solid #c8c8c8; margin-bottom: 2px; }
.grid-tabs { height: 21px; flex: none; border-bottom: 1px solid #b0b0b0; }
.grid-body { flex: 1; min-height: 0; display: flex; border-bottom: 1px solid #a0a0a0; }
.grid-clip { flex: 1; min-width: 0; overflow: hidden; padding: 5px 0 0 1px; }
.grid { width: 370px; table-layout: fixed; border-collapse: collapse; font-size: 12px; }
.c1 { width: 21px; } .c2 { width: 9px; } .c3 { width: 182px; } .c4 { width: 126px; } .c5 { width: 32px; }
.grid th { height: 22px; padding: 0; background: #f2f2f2; font-weight: normal; border: 1px solid #c0c0c0; color: #111; }
.grid th.hot { background: #e8bb68; }
.grid td { height: 19px; padding: 0; border: 1px solid #c4c4c4; white-space: nowrap; overflow: hidden; line-height: 16px; }
.grid td:first-child { background: #f2f2f2; text-align: center; font-size: 12px; color: #333; }
.grid td.cur { background: #c8dbed; }
.nm { font: 11px/16px "Liberation Mono", monospace; letter-spacing: -.6px; color: #333; padding-left: 22px !important; background: linear-gradient(#888, #888) 0 50% / 17px 1px no-repeat; }
.nm.cjk { font: 12px/16px "Noto Sans CJK SC", sans-serif; letter-spacing: 0; }
.val { font: 11px/16px "Liberation Mono", monospace; letter-spacing: -.2px; padding-left: 3px !important; color: #333; }
.chk { width: 13px; height: 13px; border: 1px solid #444; margin: 0 auto; background: #fff; }
.vscroll2 { width: 13px; flex: none; margin-right: 4px; background: #f0f0f0; position: relative; }
.arrow-end { left: -1px; }
.v2-thumb { display: block; height: 370px; background: #cdcdcd; }

/* status */
.statusbar { height: 11px; flex: none; display: flex; background: #f4f4f4; overflow: hidden; font-size: 12px; line-height: 14px; color: #111; border-top: 1px solid #ddd; }
.s { display: block; border-left: 1px solid #b8b8b8; padding: 3px 0 0 3px; white-space: nowrap; height: 20px; }
.s1 { width: 149px; border-left: none; }
.s2 { width: 81px; }
.s3 { width: 97px; }
.s4 { width: 51px; }
.s5 { width: 300px; }
.s6 { width: 617px; }
.s7 { flex: 1; }

/* overlays */
.badge { position: absolute; left: 1098px; top: -30px; width: 48px; height: 48px; border-radius: 50%; background: #3cb558; border: 2px solid #dfe8e0; box-shadow: 0 2px 4px rgba(0,0,0,.45); color: #fff; font: bold 10px/12px "Liberation Sans", sans-serif; text-align: center; }
.badge span { display: block; margin-top: 29px; }

.sogou { position: absolute; left: 1180px; top: 66px; width: 185px; height: 23px; background: #fff; border-bottom: 1px solid #bcd4ea; display: flex; align-items: center; padding-left: 13px; }
.sg-logo { position: absolute; left: -21px; top: -2px; width: 27px; height: 27px; }
.sg-en { color: #1f6fc0; font: bold 14px/16px "Noto Sans CJK SC", sans-serif; }
.sg { height: 14px; }
.sg-m { width: 13px; margin-left: 10px; }
.sg-p { width: 8px; margin-left: 10px; }
.sg-v { width: 13px; margin-left: 12px; }
.sg-k { width: 16px; margin-left: 7px; }
.sg-u { width: 16px; margin-left: 8px; }
.sg-s { width: 14px; margin-left: 6px; }
.sg-w { width: 14px; margin-left: 7px; }

.poi { position: absolute; left: 101px; top: 120px; width: 52px; height: 24px; background: #fff; color: #aaa; display: flex; align-items: center; padding-left: 3px; font-size: 12px; }
.poi span { flex: 1; }
.poi i { width: 20px; height: 14px; background: #e4e4e4; margin: -6px 0 0; }
.poi-start { position: absolute; left: 101px; top: 146px; width: 52px; height: 22px; background: #f0f0f0; border: 1px solid #9a9a9a; border-right: 2px solid #555; border-bottom: 2px solid #555; text-align: center; line-height: 18px; font-size: 12px; }

.param { position: absolute; left: 944px; top: 202px; width: 400px; height: 501px; border: 1px solid #59636b; background: linear-gradient(#b6c7d7, #d5e2f0 32px, #d5e2f0); padding: 0 8px; }
.param-title { height: 30px; padding-top: 12px; color: #9a9a9a; font-size: 12px; line-height: 14px; }
.param-svg { width: 382px; height: 460px; background: #000; }
.w { fill: none; stroke: #fff; stroke-width: 1; }
.solid { fill: url(#hatch); }
.r { fill: none; stroke: #e8000c; stroke-width: 2; }
.dots { fill: #ffe860; }
.cy { fill: none; stroke: #22d8e8; stroke-width: 2; }
.tm { font: 15px "Liberation Mono", monospace; letter-spacing: -1px; }
.tc { font: 15px "Liberation Mono", "Noto Sans CJK SC", monospace; }
.twh { fill: #fff; }
.tgr { fill: #40c040; }
.tcy { fill: #30d8e8; }

.dialog { position: absolute; left: 185px; top: 51px; width: 508px; height: 583px; border: 1px solid #4a90c8; background: #f0f0f0; box-shadow: 0 5px 22px rgba(0,0,0,.35); display: flex; flex-direction: column; }
.dlg-title { height: 26px; flex: none; background: #fff; display: flex; align-items: center; padding-left: 3px; font-size: 12px; color: #111; justify-content: space-between; padding-right: 10px; }
.dlg-x { width: 12px; height: 12px; }
.dlg-body { flex: 1; min-height: 0; display: flex; flex-direction: column; padding: 0 16px 0 9px; }
.group { margin: 7px 0 0; padding: 0 4px 4px; border: 1px solid #dcdcdc; height: 506px; min-width: 0; }
.group legend { padding: 0 2px; margin-left: 0; font-size: 12px; line-height: 16px; color: #111; }
.cards { display: grid; grid-template-columns: repeat(3, 155px); grid-auto-rows: 158px; gap: 4px 3px; margin-top: 2px; }
.card { background: #f0f0f0; border: 1px solid; border-color: #e4e4e4 #a8a8a8 #a0a0a0 #e4e4e4; padding: 8px 0 0 6px; }
.card.on { background: #00ffff; border-color: #dff #a8a8a8 #a0a0a0 #dff; }
.pic { width: 140px; height: 140px; background: #008080; fill: none; stroke: #fff; stroke-width: 1; }
.pic text { fill: #fff; stroke: none; font: 300 14px "Noto Sans CJK SC", sans-serif; }
.dlg-foot { flex: 1; display: flex; justify-content: flex-end; align-items: center; gap: 15px; padding-top: 2px; margin-right: -2px; }
.btn { width: 72px; height: 22px; padding: 0; border: 1px solid #adadad; background: #e1e1e1; font: 12px/16px "Noto Sans CJK SC", sans-serif; color: #111; }
.btn.primary { border: 2px solid #1a6fb5; }
```
